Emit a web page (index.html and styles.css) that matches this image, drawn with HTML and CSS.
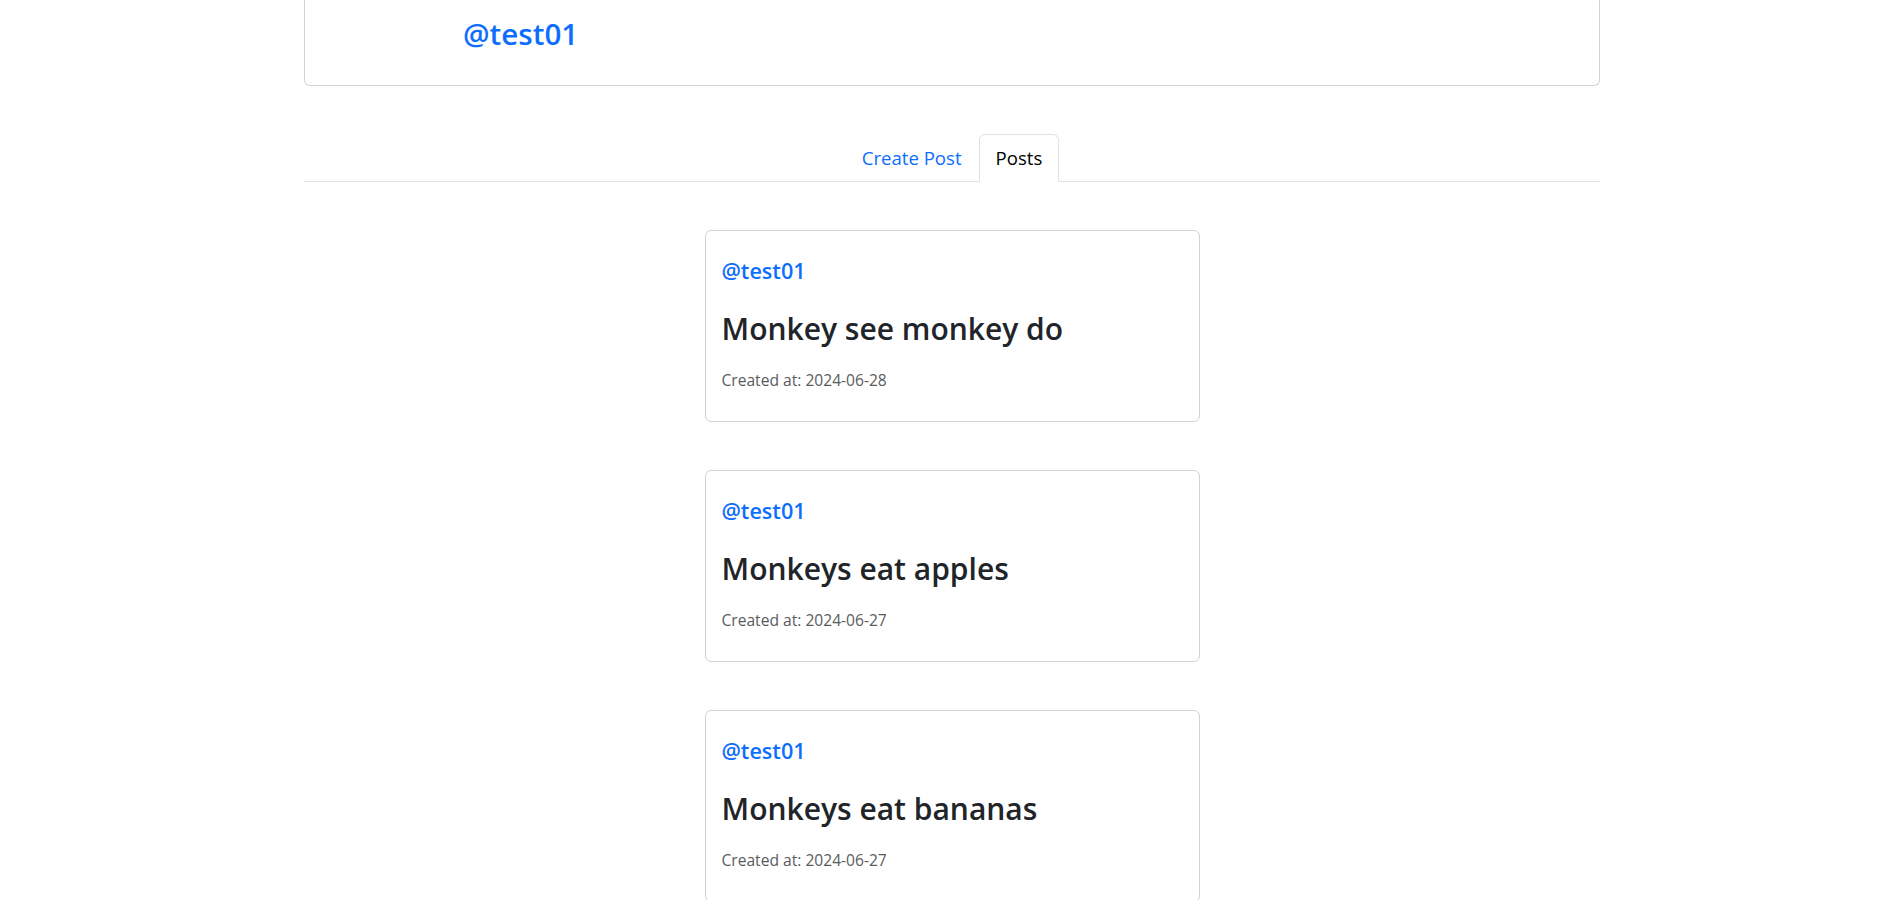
FILE: index.html
```html
<!DOCTYPE html>
<html lang="en">
<head>
<meta charset="utf-8">
<title>@test01</title>
<link rel="stylesheet" href="styles.css">
</head>
<body>
<div class="container">
  <div class="profile-card">
    <a class="profile-name" href="#">@test01</a>
  </div>

  <nav class="tabs">
    <a class="tab" href="#">Create Post</a>
    <a class="tab tab-active" href="#">Posts</a>
  </nav>

  <div class="posts">
    <div class="post-card">
      <a class="post-user" href="#">@test01</a>
      <h3 class="post-title">Monkey see monkey do</h3>
      <div class="post-date">Created at: 2024-06-28</div>
    </div>
    <div class="post-card">
      <a class="post-user" href="#">@test01</a>
      <h3 class="post-title">Monkeys eat apples</h3>
      <div class="post-date">Created at: 2024-06-27</div>
    </div>
    <div class="post-card">
      <a class="post-user" href="#">@test01</a>
      <h3 class="post-title">Monkeys eat bananas</h3>
      <div class="post-date">Created at: 2024-06-27</div>
    </div>
  </div>
</div>
</body>
</html>
```
FILE: styles.css
```css
* { box-sizing: border-box; }

body {
  margin: 0;
  background: #fff;
  font-family: "Open Sans", "Noto Sans", sans-serif;
  color: #212529;
}

a { text-decoration: none; }

.container {
  width: 1296px;
  margin-left: 304px;
}

.profile-card {
  height: 86px;
  border: 1px solid #d2d2d2;
  border-top: none;
  border-radius: 0 0 6px 6px;
  padding: 14px 0 0 158px;
}

.profile-name {
  display: inline-block;
  font-size: 29.6px;
  font-weight: 600;
  line-height: 40px;
  color: #0d6efd;
}

.tabs {
  margin-top: 48px;
  display: flex;
  justify-content: center;
  border-bottom: 1px solid #dee2e6;
}

.tab {
  display: block;
  margin-bottom: -1px;
  padding: 8px 16px;
  font-size: 18.6px;
  line-height: 30px;
  color: #0d6efd;
  border: 1px solid transparent;
  border-radius: 6px 6px 0 0;
}

.tab-active {
  color: #000;
  background: #fff;
  border-color: #dee2e6 #dee2e6 #fff;
}

.posts {
  margin-top: 48px;
  display: flex;
  flex-direction: column;
  align-items: center;
  gap: 48px;
}

.post-card {
  width: 495px;
  border: 1px solid #d2d2d2;
  border-radius: 6px;
  padding: 27px 17px 31px 16px;
  display: flex;
  flex-direction: column;
  align-items: flex-start;
}

.post-user {
  font-size: 21.6px;
  font-weight: 600;
  line-height: 26px;
  color: #0d6efd;
}

.post-title {
  margin: 25.5px 0 0;
  font-size: 30px;
  font-weight: 600;
  line-height: 37px;
  color: #212529;
}

.post-date {
  margin-top: 23.5px;
  font-size: 15.6px;
  line-height: 20px;
  color: #595c5f;
}
```
